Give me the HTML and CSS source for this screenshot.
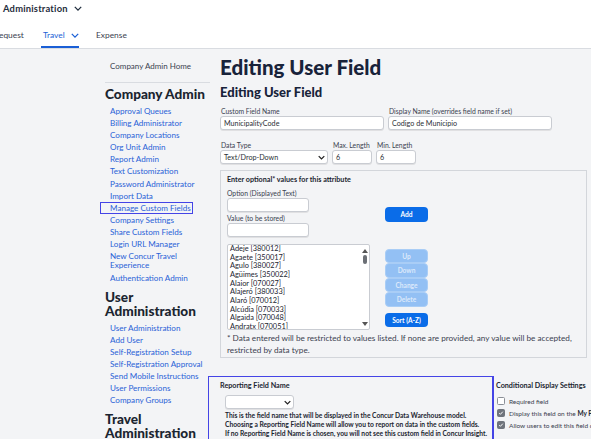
FILE: index.html
```html
<!DOCTYPE html>
<html>
<head>
<meta charset="utf-8">
<link rel="stylesheet" href="styles.css">
</head>
<body>
<header class="top">
  <div class="brand">Administration <svg class="chev" viewBox="0 0 10 6" width="8" height="5"><path d="M1 1l4 4 4-4" fill="none" stroke="#1f2d3d" stroke-width="1.6"/></svg></div>
  <nav class="tabs">
    <span class="tab cut">equest</span>
    <span class="tab active">Travel <svg class="chev" viewBox="0 0 10 6" width="8" height="5"><path d="M1 1l4 4 4-4" fill="none" stroke="#1a5fd6" stroke-width="1.6"/></svg></span>
    <span class="tab">Expense</span>
  </nav>
</header>
<div class="page">
  <aside class="side">
    <div class="home">Company Admin Home</div>
    <h3 class="sh">Company Admin</h3>
    <ul class="links">
      <li>Approval Queues</li>
      <li>Billing Administrator</li>
      <li>Company Locations</li>
      <li>Org Unit Admin</li>
      <li>Report Admin</li>
      <li>Text Customization</li>
      <li>Password Administrator</li>
      <li>Import Data</li>
      <li class="hl">Manage Custom Fields</li>
      <li>Company Settings</li>
      <li>Share Custom Fields</li>
      <li>Login URL Manager</li>
      <li class="two">New Concur Travel Experience</li>
      <li>Authentication Admin</li>
    </ul>
    <h3 class="sh">User Administration</h3>
    <ul class="links">
      <li>User Administration</li>
      <li>Add User</li>
      <li>Self-Registration Setup</li>
      <li>Self-Registration Approval</li>
      <li>Send Mobile Instructions</li>
      <li>User Permissions</li>
      <li>Company Groups</li>
    </ul>
    <h3 class="sh">Travel Administration</h3>
  </aside>
  <main class="main">
    <h1 class="h1">Editing User Field</h1>
    <h2 class="h2">Editing User Field</h2>
    <div class="row">
      <label class="fld w-name"><span class="lbl">Custom Field Name</span><span class="inp">MunicipalityCode</span></label>
      <label class="fld w-name"><span class="lbl">Display Name (overrides field name if set)</span><span class="inp">Codigo de Municipio</span></label>
    </div>
    <div class="row row2">
      <label class="fld w-type"><span class="lbl">Data Type</span><span class="inp sel">Text/Drop-Down<svg class="selchev" viewBox="0 0 10 6" width="7" height="5"><path d="M1 1l4 4 4-4" fill="none" stroke="#222" stroke-width="1.8"/></svg></span></label>
      <label class="fld w-len"><span class="lbl">Max. Length</span><span class="inp">6</span></label>
      <label class="fld w-len"><span class="lbl">Min. Length</span><span class="inp">6</span></label>
    </div>
    <section class="opts">
      <div class="opt-title">Enter optional* values for this attribute</div>
      <div class="opt-grid">
        <div class="opt-left">
          <span class="lbl2 first">Option (Displayed Text)</span>
          <span class="inp box"></span>
          <span class="lbl2">Value (to be stored)</span>
          <span class="inp box"></span>
          <div class="listbox">
            <ul class="items">
              <li>Adeje [380012]</li>
              <li>Agaete [350017]</li>
              <li>Agulo [380027]</li>
              <li>Agüimes [350022]</li>
              <li>Alaior [070027]</li>
              <li>Alajeró [380033]</li>
              <li>Alaró [070012]</li>
              <li>Alcúdia [070033]</li>
              <li>Algaida [070048]</li>
              <li>Andratx [070051]</li>
            </ul>
            <div class="sbar">
              <svg viewBox="0 0 6 4" width="6" height="4"><path d="M0 4L3 0l3 4z" fill="#555"/></svg>
              <div class="thumb"></div>
              <div class="grow"></div>
              <svg viewBox="0 0 6 4" width="6" height="4"><path d="M0 0l3 4 3-4z" fill="#555"/></svg>
            </div>
          </div>
        </div>
        <div class="opt-btns">
          <button class="btn add">Add</button>
          <div class="btnstack">
            <button class="btn dis">Up</button>
            <button class="btn dis">Down</button>
            <button class="btn dis">Change</button>
            <button class="btn dis">Delete</button>
          </div>
          <button class="btn sort">Sort (A-Z)</button>
        </div>
      </div>
      <p class="note">* Data entered will be restricted to values listed. If none are provided, any value will be accepted, restricted by data type.</p>
    </section>
    <div class="bottom">
      <section class="report">
        <div class="rtitle">Reporting Field Name</div>
        <span class="inp rsel"><svg class="selchev" viewBox="0 0 10 6" width="7" height="5"><path d="M1 1l4 4 4-4" fill="none" stroke="#222" stroke-width="1.8"/></svg></span>
        <p class="rdesc">This is the field name that will be displayed in the Concur Data Warehouse model.<br>Choosing a Reporting Field Name will allow you to report on data in the custom fields.<br>If no Reporting Field Name is chosen, you will not see this custom field in Concur Insight.</p>
      </section>
      <section class="cond">
        <div class="rtitle">Conditional Display Settings</div>
        <div class="chk"><span class="cb"></span>Required field</div>
        <div class="chk"><span class="cb on"><svg viewBox="0 0 10 10" width="8" height="8"><path d="M2 5.2l2 2L8 2.8" fill="none" stroke="#fff" stroke-width="1.6"/></svg></span>Display this field on the&nbsp;<b>My Profile</b>&nbsp;page</div>
        <div class="chk"><span class="cb on"><svg viewBox="0 0 10 10" width="8" height="8"><path d="M2 5.2l2 2L8 2.8" fill="none" stroke="#fff" stroke-width="1.6"/></svg></span>Allow users to edit this field on the page</div>
      </section>
    </div>
  </main>
</div>
</body>
</html>
```
FILE: styles.css
```css
* { box-sizing: border-box; }
html, body { margin: 0; padding: 0; }
body {
  font-family: "Lato", "Open Sans", sans-serif;
  background: #f3f4f6;
  color: #2b2f36;
  width: 591px;
  height: 439px;
  overflow: hidden;
}
.top {
  background: #fff;
  height: 49px;
  border-bottom: 1px solid #d9dce1;
}
.brand {
  height: 17px;
  padding-left: 3px;
  font-size: 9.4px;
  font-weight: 700;
  color: #1f2d3d;
  display: flex;
  align-items: center;
  gap: 6px;
  letter-spacing: 0.2px;
}
.tabs {
  display: flex;
  height: 31px;
  margin-left: -1px;
}
.tab {
  font-size: 8.4px;
  color: #3b4250;
  padding: 13px 0 0;
  height: 31px;
  display: flex;
  align-items: flex-start;
  gap: 6px;
}
.tab.cut { width: 42px; }
.tab.active {
  color: #1a5fd6;
  border-bottom: 2px solid #1a5fd6;
  width: 38px;
  margin-right: 17px;
  padding-left: 2px;
}
.tab.active .chev { margin-top: 3px; }
.page {
  display: flex;
  padding-left: 105px;
}
.side { width: 115px; flex: none; }
.home {
  font-size: 8px;
  color: #3b4250;
  padding: 12px 0 0 5px;
  height: 34px;
  border-bottom: 1px solid #d9dce1;
  margin-right: 10px;
}
.sh {
  margin: 4px 0 0;
  font-size: 13.6px;
  font-weight: 900;
  color: #1b2530;
  line-height: 14px;
  width: 110px;
}
.sh + .links { margin-top: 4px; }
.links {
  list-style: none;
  margin: 0 0 6px;
  padding: 0 0 0 5px;
}
.links li {
  font-size: 8.1px;
  line-height: 12.1px;
  color: #2a62d6;
  width: 102px;
  white-space: nowrap;
}
.links li.two { white-space: normal; width: 86px; line-height: 9.3px; padding: 1.6px 0 1.2px; }
.links .hl {
  outline: 1.5px solid #4444e6;
  width: 91px;
  margin-left: -9px;
  padding-left: 9px;
  line-height: 10.1px;
  margin-top: 1px;
  margin-bottom: 1px;
}
.main { flex: 1; }
.h1 {
  margin: 6px 0 0;
  font-size: 20.5px;
  font-weight: 900;
  color: #18233a;
  line-height: 25px;
}
.h2 {
  margin: 4px 0 0;
  font-size: 13px;
  font-weight: 900;
  color: #18233a;
  line-height: 16px;
}
.row { display: flex; gap: 4px; margin-top: 7px; }
.row2 { margin-top: 11px; }
.fld { display: flex; flex-direction: column; }
.lbl { font-size: 6.8px; color: #3b4250; line-height: 9px; margin-left: 1px; white-space: nowrap; }
.inp {
  display: flex;
  align-items: center;
  background: #fff;
  border: 1px solid #c9ccd2;
  border-radius: 3px;
  height: 14px;
  font-size: 7.2px;
  color: #2b2f36;
  padding-left: 3px;
  box-shadow: 0 1px 0 rgba(0,0,0,0.08);
}
.w-name { width: 164px; }
.w-type { width: 108px; }
.w-len { width: 40px; }
.sel { justify-content: space-between; padding-right: 2px; }
.opts {
  margin-top: 6px;
  width: 367px;
  height: 188px;
  border: 1px solid #d3d6db;
  padding: 4px 6px 0;
}
.opt-title { font-size: 7.2px; font-weight: 700; color: #1b2530; line-height: 10px; }
.opt-grid { display: flex; }
.opt-left { width: 158px; display: flex; flex-direction: column; }
.lbl2 { font-size: 6.8px; color: #3b4250; line-height: 9px; margin-top: 2px; }
.lbl2.first { margin-top: 4px; }
.box { width: 82px; height: 14px; }
.listbox {
  margin-top: 7px;
  width: 143px;
  height: 86px;
  background: #fff;
  border: 1px solid #c9ccd2;
  border-radius: 2px;
  display: flex;
  overflow: hidden;
}
.items {
  list-style: none;
  margin: 0;
  padding: 0 0 0 2px;
  flex: 1;
}
.items li { font-size: 7.4px; line-height: 8.65px; color: #1b2530; white-space: nowrap; }
.sbar {
  width: 8px;
  display: flex;
  flex-direction: column;
  align-items: center;
  padding: 4px 0 3px;
}
.thumb {
  width: 4px;
  height: 9px;
  background: #6b6f75;
  border-radius: 2px;
  margin-top: 2px;
}
.grow { flex: 1; }
.opt-btns {
  display: flex;
  flex-direction: column;
  padding-top: 22px;
}
.btn {
  font-family: inherit;
  font-size: 6.6px;
  font-weight: 700;
  color: #fff;
  background: #0a6ce8;
  border: none;
  border-radius: 4px;
  width: 43px;
  height: 14.5px;
  padding: 0;
}
.btnstack { margin-top: 27px; display: flex; flex-direction: column; }
.btn.dis { background: #93c0f4; color: #dce9fb; height: 14.5px; border: 0.5px solid #a9cdf6; }
.sort { margin-top: 6px; }
.note {
  margin: 2px 0 0;
  font-size: 8.2px;
  line-height: 12px;
  color: #3b4250;
}
.bottom { display: flex; margin-top: 18px; }
.report {
  margin-left: -12px;
  width: 286px;
  height: 70px;
  border: 1.5px solid #4444e6;
  border-right-width: 2px;
  padding: 4px 0 0 11px;
  flex: none;
}
.rtitle { font-size: 7.2px; font-weight: 700; color: #1b2530; line-height: 10px; white-space: nowrap; }
.rsel { width: 69px; margin: 4px 0 0 5px; justify-content: flex-end; padding-right: 2px; }
.rdesc {
  margin: 2px 0 0 5px;
  font-size: 6.7px;
  font-weight: 700;
  line-height: 9px;
  color: #1b2530;
  white-space: nowrap;
}
.cond { padding: 5px 0 0 2px; white-space: nowrap; }
.chk {
  display: flex;
  align-items: center;
  font-size: 6.5px;
  color: #3b4250;
  height: 12px;
}
.chk:nth-of-type(2) { margin-top: 4px; }
.chk b { color: #1b2530; }
.cb {
  width: 8px;
  height: 8px;
  border: 1px solid #8a8f97;
  border-radius: 1.5px;
  background: #fff;
  margin: 0 4px 0 1px;
  display: flex;
  align-items: center;
  justify-content: center;
}
.cb.on { background: #6f747c; border-color: #6f747c; }
```
